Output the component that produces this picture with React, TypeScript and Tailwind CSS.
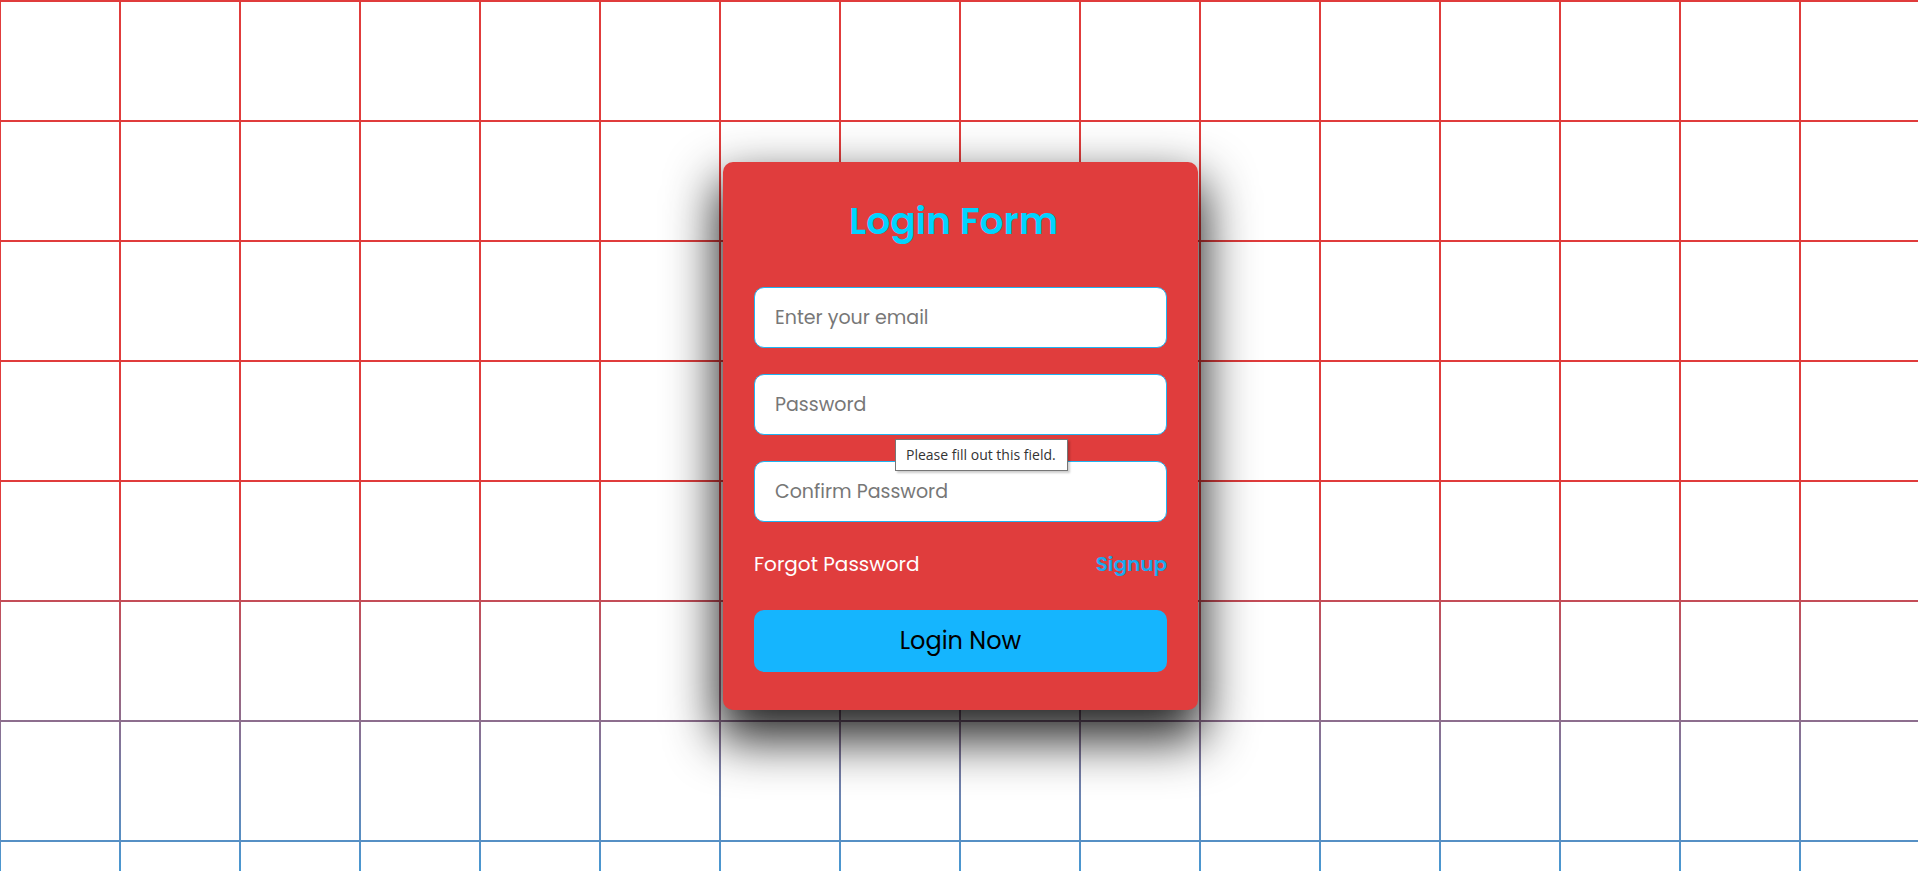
import { useState } from "react";

export default function App() {
  const [email, setEmail] = useState("");
  const [password, setPassword] = useState("");
  const [confirm, setConfirm] = useState("");

  return (
    <div className="relative h-screen w-full overflow-hidden bg-white font-['Poppins','Open_Sans',sans-serif]">
      {/* grid background: gradient colour shown only through a 120px grid mask */}
      <div
        aria-hidden
        className="absolute inset-0 bg-[linear-gradient(to_bottom,#e03c3c_0%,#e03c3c_62%,#4898d2_100%)] [mask-image:linear-gradient(to_right,black_2px,transparent_2px),linear-gradient(to_bottom,black_2px,transparent_2px)] [mask-size:120px_120px] [mask-position:-1px_0px]"
      />

      <div className="relative flex h-full items-center justify-center">
        <form
          onSubmit={(e) => e.preventDefault()}
          className="ml-[3px] w-[475px] rounded-[10px] bg-[#e03d3d] px-[31px] pt-[31px] pb-[38px] shadow-[0_24px_50px_6px_rgba(0,0,0,0.85)]"
        >
          <h2 className="mb-[38px] pr-[14px] text-center text-[37.5px] leading-[56px] font-semibold text-[#00d4ff]">
            Login Form
          </h2>

          <div className="flex flex-col gap-[26px]">
            <input
              type="email"
              value={email}
              onChange={(e) => setEmail(e.target.value)}
              placeholder="Enter your email"
              required
              className="h-[61px] w-full rounded-[10px] border border-[#1fb4f2] bg-white px-[20px] text-[19px] text-gray-800 outline-none placeholder:text-[#777]"
            />
            <div className="relative">
              <input
                type="password"
                value={password}
                onChange={(e) => setPassword(e.target.value)}
                placeholder="Password"
                required
                className="h-[61px] w-full rounded-[10px] border border-[#1fb4f2] bg-white px-[20px] text-[19px] text-gray-800 outline-none placeholder:text-[#777]"
              />
              {/* browser validation bubble */}
              <div className="absolute top-[65px] left-[141px] z-10 flex h-[32px] w-[173px] items-center border border-[#767676] bg-white px-[10px] font-['Open_Sans',sans-serif] text-[14px] whitespace-nowrap text-[#333] shadow-[2px_2px_2px_rgba(0,0,0,0.2)]">
                Please fill out this field.
              </div>
            </div>
            <input
              type="password"
              value={confirm}
              onChange={(e) => setConfirm(e.target.value)}
              placeholder="Confirm Password"
              required
              className="h-[61px] w-full rounded-[10px] border border-[#1fb4f2] bg-white px-[20px] text-[19px] text-gray-800 outline-none placeholder:text-[#777]"
            />
          </div>

          <div className="mt-[27px] flex items-center justify-between text-[20px] leading-[30px]">
            <a href="#" className="text-white">
              Forgot Password
            </a>
            <a href="#" className="font-semibold text-[#1aa9ef]">
              Signup
            </a>
          </div>

          <button
            type="submit"
            className="mt-[31px] h-[62px] w-full rounded-[10px] bg-[#15b5fe] text-[24px] text-black"
          >
            Login Now
          </button>
        </form>
      </div>
    </div>
  );
}
